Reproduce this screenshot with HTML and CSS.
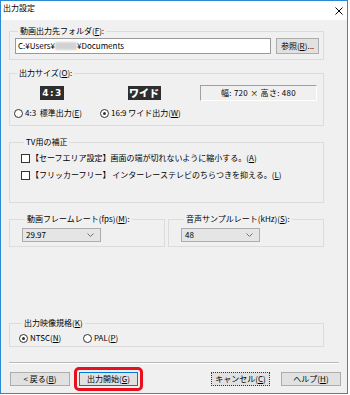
FILE: index.html
```html
<!DOCTYPE html>
<html lang="ja">
<head>
    <meta charset="UTF-8">
    <title>出力設定</title>
    <link rel="stylesheet" href="styles.css">
</head>
<body>
    <div class="window">
        <div class="titlebar">
            <span class="title">出力設定</span>
            <svg class="close" width="8" height="8" viewBox="0 0 8 8">
                <path d="M0.5 0.5 L7.5 7.5 M7.5 0.5 L0.5 7.5" stroke="#000" stroke-width="1" fill="none"/>
            </svg>
        </div>

        <div class="dialog">
            <div class="groups">
                <!-- output folder -->
                <fieldset class="group group-folder">
                    <legend>動画出力先フォルダ(<u>F</u>):</legend>
                    <div class="folder-row">
                        <div class="textbox">C:¥Users¥<span class="masked"></span>¥Documents</div>
                        <button class="btn btn-browse">参照(<u>R</u>)...</button>
                    </div>
                </fieldset>

                <!-- output size -->
                <fieldset class="group group-size">
                    <legend>出力サイズ(<u>O</u>):</legend>
                    <div class="size-row">
                        <div class="size-cell size-cell-std"><span class="badge badge-std">4:3</span></div>
                        <div class="size-cell size-cell-wide"><span class="badge badge-wide">ワイド</span></div>
                        <div class="dimension">幅: 720 × 高さ: 480</div>
                    </div>
                    <div class="size-radios">
                        <label class="option size-cell-std"><span class="radio"></span>4:3&nbsp; 標準出力(<u>E</u>)</label>
                        <label class="option size-cell-wide"><span class="radio checked"></span>16:9 ワイド出力(<u>W</u>)</label>
                    </div>
                </fieldset>

                <!-- TV correction -->
                <fieldset class="group group-tv">
                    <legend>TV用の補正</legend>
                    <label class="option"><span class="checkbox"></span>【セーフエリア設定】画面の端が切れないように縮小する。(<u>A</u>)</label>
                    <label class="option"><span class="checkbox"></span>【フリッカーフリー】 インターレーステレビのちらつきを抑える。(<u>L</u>)</label>
                </fieldset>

                <!-- rates -->
                <div class="rate-row">
                    <fieldset class="group group-rate">
                        <legend>動画フレームレート(fps)(<u>M</u>):</legend>
                        <div class="combo">
                            <span>29.97</span>
                            <svg width="7" height="4" viewBox="0 0 7 4"><path d="M0.5 0.5 L3.5 3.5 L6.5 0.5" stroke="#707070" fill="none"/></svg>
                        </div>
                    </fieldset>
                    <fieldset class="group group-rate">
                        <legend>音声サンプルレート(kHz)(<u>S</u>):</legend>
                        <div class="combo">
                            <span>48</span>
                            <svg width="7" height="4" viewBox="0 0 7 4"><path d="M0.5 0.5 L3.5 3.5 L6.5 0.5" stroke="#707070" fill="none"/></svg>
                        </div>
                    </fieldset>
                </div>

                <!-- video standard -->
                <fieldset class="group group-standard">
                    <legend>出力映像規格(<u>K</u>)</legend>
                    <div class="standard-row">
                        <label class="option option-ntsc"><span class="radio checked"></span>NTSC(<u>N</u>)</label>
                        <label class="option"><span class="radio"></span>PAL(<u>P</u>)</label>
                    </div>
                </fieldset>
            </div>

            <div class="separator"></div>

            <div class="buttons">
                <button class="btn">&lt; 戻る(<u>B</u>)</button>
                <span class="highlight"><button class="btn btn-default">出力開始(<u>G</u>)</button></span>
                <button class="btn btn-focus">キャンセル(<u>C</u>)</button>
                <button class="btn btn-help">ヘルプ(<u>H</u>)</button>
            </div>
        </div>
    </div>
</body>
</html>
```

FILE: styles.css
```css
* {
    margin: 0;
    padding: 0;
    box-sizing: border-box;
}

body {
    font-family: "Noto Sans CJK JP", "Noto Sans", sans-serif;
    font-size: 8px;
    color: #000;
    background: #fff;
}

u {
    text-decoration-thickness: 1px;
    text-underline-offset: 1px;
}

.window {
    width: 348px;
    height: 394px;
    border: 1px solid #2b8ad6;
    background: #f0f0f0;
    display: flex;
    flex-direction: column;
}

.titlebar {
    height: 19px;
    background: #fff;
    display: flex;
    justify-content: space-between;
    align-items: flex-start;
    padding: 2px 4px 0 2px;
}

.title {
    font-size: 8px;
    line-height: 10px;
}

.close {
    margin-top: 4px;
}

.dialog {
    flex: 1;
    padding: 6px 6px 0 8px;
}

.groups {
    width: 315px;
}

.group {
    border: 1px solid #dcdcdc;
    min-width: 0;
}

.group legend {
    margin-left: 3px;
    padding: 0 2px;
    line-height: 10px;
}

/* folder */
.group-folder {
    padding: 2px 4px 5px 5px;
}

.folder-row {
    display: flex;
    gap: 5px;
}

.textbox {
    width: 256px;
    height: 16px;
    background: #fff;
    border: 1px solid #9a9a9a;
    line-height: 14px;
    padding-left: 2px;
    white-space: nowrap;
}

.masked {
    display: inline-block;
    width: 22px;
    height: 8px;
    background: #d2d2d2;
    filter: blur(1px);
    vertical-align: -1px;
}

.btn {
    font-family: inherit;
    font-size: 8px;
    line-height: 12px;
    height: 14px;
    background: #e1e1e1;
    border: 1px solid #adadad;
    color: #000;
    white-space: nowrap;
}

.btn-browse {
    width: 43px;
    height: 16px;
}

/* output size */
.group-size {
    margin-top: 8px;
    padding: 7px 5px 6px 4px;
}

.size-row {
    display: flex;
    height: 16px;
}

.size-cell {
    display: flex;
    justify-content: center;
    padding-top: 1px;
}

.size-cell-std {
    width: 76px;
}

.size-cell-wide {
    width: 88px;
    margin-left: 10px;
}

.badge {
    height: 14px;
    background: #2e2e2e;
    color: #fff;
    font-weight: 900;
    font-size: 11px;
    line-height: 14px;
    text-align: center;
}

.badge-std {
    width: 24px;
    font-family: "DejaVu Sans", sans-serif;
    font-weight: bold;
    font-size: 9px;
    letter-spacing: 1.5px;
    padding-left: 1px;
}

.badge-wide {
    width: 33px;
    font-size: 10px;
}

.dimension {
    width: 117px;
    height: 16px;
    margin-left: 12px;
    border-top: 1px solid #a0a0a0;
    border-left: 1px solid #a0a0a0;
    border-bottom: 1px solid #fff;
    border-right: 1px solid #fff;
    text-align: center;
    line-height: 14px;
    letter-spacing: 0.3px;
}

.size-radios {
    display: flex;
    margin-top: 6px;
}

.option {
    display: flex;
    align-items: center;
    height: 12px;
    line-height: 12px;
    white-space: nowrap;
}

.radio {
    width: 9px;
    height: 9px;
    border: 1px solid #333;
    border-radius: 50%;
    background: #fff;
    margin-right: 2px;
    display: flex;
    align-items: center;
    justify-content: center;
    flex-shrink: 0;
}

.radio.checked::after {
    content: "";
    width: 3px;
    height: 3px;
    border-radius: 50%;
    background: #333;
}

.checkbox {
    width: 9px;
    height: 9px;
    border: 1px solid #333;
    background: #fff;
    margin-right: 1px;
    flex-shrink: 0;
}

/* TV correction */
.group-tv {
    margin-top: 11px;
    padding: 5px 4px 21px 11px;
    display: flex;
    flex-direction: column;
    gap: 5px;
}

/* rates */
.rate-row {
    display: grid;
    grid-template-columns: 1fr 1fr;
    gap: 3px;
    margin-top: 11px;
}

.group-rate {
    padding: 4px 4px 4px 12px;
}

.combo {
    width: 79px;
    height: 14px;
    background: #e5e5e5;
    border: 1px solid #adadad;
    display: flex;
    align-items: center;
    justify-content: space-between;
    padding: 0 6px 0 3px;
    line-height: 12px;
}

/* video standard */
.group-standard {
    margin-top: 71px;
    padding: 4px 4px 2px 9px;
}

.standard-row {
    display: flex;
}

.option-ntsc {
    width: 64px;
}

.separator {
    width: 330px;
    height: 2px;
    margin-top: 15px;
    border-top: 1px solid #b9b9b9;
    border-bottom: 1px solid #fff;
}

/* bottom buttons */
.buttons {
    display: flex;
    margin-top: 8px;
    padding-left: 1px;
}

.buttons .btn {
    width: 60px;
}

.highlight {
    position: relative;
    display: flex;
    margin-left: 9px;
}

.highlight .btn {
    width: 59px;
}

.highlight::after {
    content: "";
    position: absolute;
    inset: -5px;
    border: 3px solid #e8101c;
    border-radius: 5px;
}

.btn-default {
    border-color: #0078d7;
}

.buttons .btn-focus {
    width: 59px;
    margin-left: auto;
    border: 1px dotted #333;
}

.btn-help {
    margin-left: 11px;
}
```
